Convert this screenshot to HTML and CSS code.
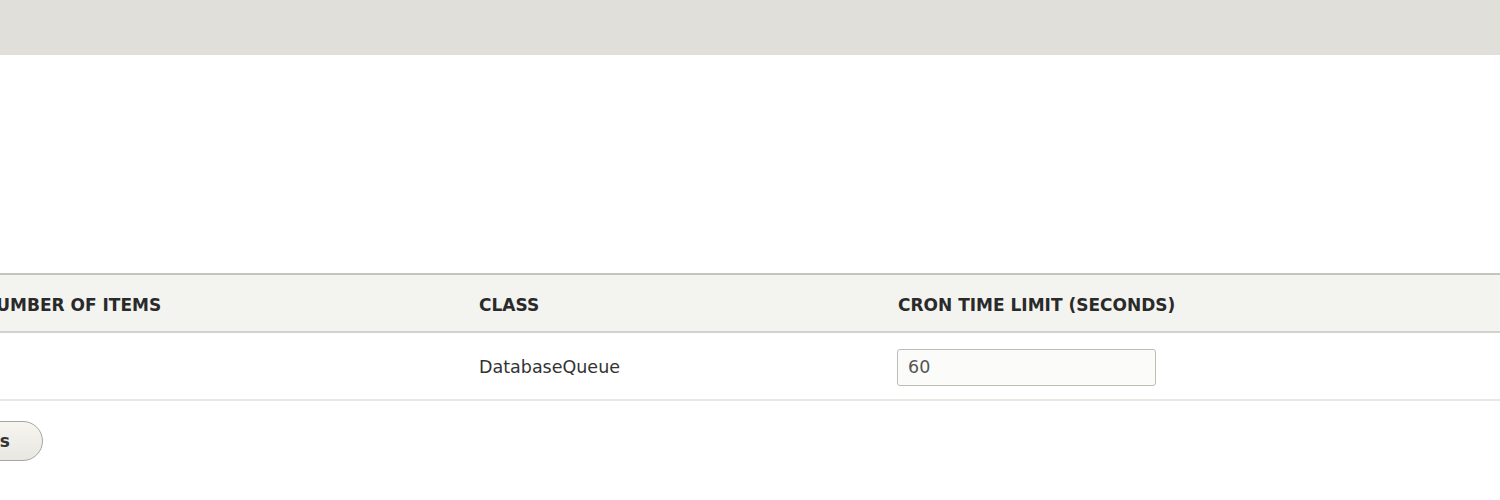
FILE: index.html
```html
<!DOCTYPE html>
<html>
<head>
<meta charset="utf-8">
<link rel="stylesheet" href="styles.css">
</head>
<body>
<div class="topbar"></div>
<main class="content">
  <table class="queue-table">
    <colgroup>
      <col class="c-items">
      <col class="c-class">
      <col class="c-limit">
    </colgroup>
    <thead>
      <tr>
        <th>Number of items</th>
        <th>Class</th>
        <th>Cron time limit (seconds)</th>
      </tr>
    </thead>
    <tbody>
      <tr>
        <td></td>
        <td>DatabaseQueue</td>
        <td><input class="form-text" type="text" value="60"></td>
      </tr>
    </tbody>
  </table>
  <div class="actions">
    <button class="button" type="submit">Save changes</button>
  </div>
</main>
</body>
</html>
```

FILE: styles.css
```css
html, body {
  margin: 0;
  padding: 0;
  background: #ffffff;
  overflow: hidden;
}
body {
  font-family: "DejaVu Sans", "Liberation Sans", sans-serif;
  color: #333333;
  font-size: 17.5px;
}
.topbar {
  height: 55px;
  background: #e0dfd9;
}
.content {
  padding-top: 218px;
}
.queue-table {
  border-collapse: collapse;
  table-layout: fixed;
  width: 1600px;
  margin-left: -30px;
}
.c-items { width: 497px; }
.c-class { width: 419px; }
.c-limit { width: 684px; }
.queue-table thead tr {
  background: #f3f3ef;
  border-top: 2px solid #c4c4bf;
  border-bottom: 2px solid #d2d2cc;
}
.queue-table th {
  text-align: left;
  text-transform: uppercase;
  font-weight: bold;
  font-size: 17px;
  color: #2a2a2a;
  height: 53px;
  padding: 3px 12px 0;
  vertical-align: middle;
}
.queue-table tbody tr {
  border-bottom: 2px solid #e8e8e3;
}
.queue-table td {
  height: 64px;
  padding: 2px 12px 0;
  vertical-align: middle;
}
.form-text {
  box-sizing: border-box;
  width: 259px;
  height: 37px;
  margin: 0 0 0 -1px;
  padding: 0 10px;
  border: 1px solid #bdbdb8;
  border-radius: 3px;
  background: #fbfbfa;
  font-family: inherit;
  font-size: 17.5px;
  color: #555555;
  display: block;
}
.actions {
  width: 43px;
  display: flex;
  justify-content: flex-end;
  margin-top: 20px;
}
.button {
  flex-shrink: 0;
  height: 40px;
  padding: 0 32px;
  border: 1px solid #a6a6a2;
  border-radius: 20px;
  background: linear-gradient(#f6f5f0, #e8e7e1);
  font-family: inherit;
  font-weight: bold;
  font-size: 17px;
  color: #333333;
}
```
